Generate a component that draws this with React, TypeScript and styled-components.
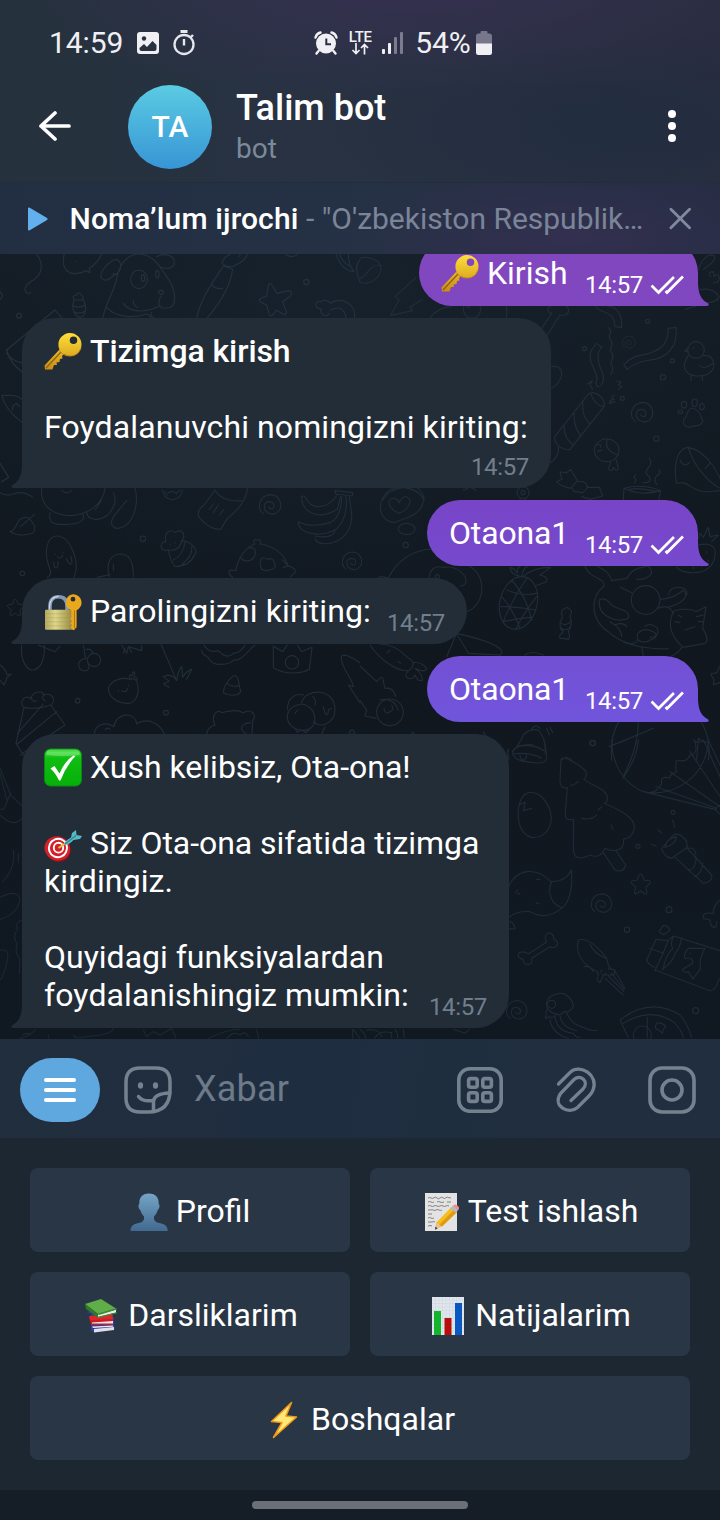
import React from "react";
import styled, { createGlobalStyle } from "styled-components";

const GlobalStyle = createGlobalStyle`
  * { box-sizing: border-box; }
  body { margin: 0; background: #151c25; }
`;

/* ---------- page ---------- */

const Screen = styled.div`
  width: 720px;
  height: 1520px;
  display: flex;
  flex-direction: column;
  overflow: hidden;
  font-family: Roboto, "Liberation Sans", sans-serif;
  color: #fff;
`;

const TopPanel = styled.header`
  height: 182px;
  flex: none;
  background:
    radial-gradient(ellipse 400px 110px at 410px -14px, #35304f 0%, rgba(53, 48, 79, 0) 100%),
    radial-gradient(ellipse 300px 100px at 610px 128px, #222d40 0%, rgba(34, 45, 64, 0) 100%),
    radial-gradient(ellipse 260px 160px at 720px 60px, #292c40 0%, rgba(41, 44, 64, 0) 100%),
    linear-gradient(90deg, #25313c 0%, #283243 40%, #28303f 100%);
`;

const StatusBar = styled.div`
  height: 72px;
  padding: 13px 0 0 49px;
  display: flex;
  align-items: center;
  color: #f0f0f4;
`;

const StatusText = styled.span<{ $gap?: number }>`
  font-size: 30px;
  line-height: 36px;
  letter-spacing: -0.1px;
  margin-left: ${(p) => p.$gap ?? 0}px;
`;

const StatusGroup = styled.div<{ $start: number; $gap: number }>`
  display: flex;
  align-items: center;
  gap: ${(p) => p.$gap}px;
  margin-left: ${(p) => p.$start}px;
`;

const NetworkType = styled.div`
  width: 24px;
  display: flex;
  flex-direction: column;
  align-items: center;
  font-size: 15px;
  font-weight: 500;
  line-height: 12px;
  letter-spacing: -0.3px;
`;

const HeaderRow = styled.div`
  height: 110px;
  display: flex;
  align-items: center;
  padding: 0 44px 0 38px;
`;

const Avatar = styled.div`
  width: 84px;
  height: 84px;
  margin-left: 56px;
  padding-bottom: 2px;
  border-radius: 50%;
  display: flex;
  align-items: center;
  justify-content: center;
  font-size: 30px;
  font-weight: 500;
  background: linear-gradient(#5bcbe3, #3795d5);
`;

const Titles = styled.div`
  flex: 1;
  margin-left: 24px;
  padding-bottom: 2px;
  display: flex;
  flex-direction: column;
`;

const Title = styled.h1`
  margin: 0;
  font-size: 36px;
  font-weight: 500;
  line-height: 42px;
`;

const Subtitle = styled.span`
  font-size: 28px;
  line-height: 34px;
  margin-top: 3px;
  color: #7b8a9a;
`;

const Player = styled.div`
  height: 72px;
  flex: none;
  display: flex;
  align-items: center;
  padding: 0 28px;
  border-top: 1px solid #242d3d;
  background:
    radial-gradient(ellipse 230px 80px at 570px 54px, #332f50 0%, rgba(51, 47, 80, 0) 100%),
    linear-gradient(90deg, #222f42 0%, #253144 55%, #252d42 100%);
`;

const TrackName = styled.div`
  width: 573px;
  margin: 0 26px 0 22px;
  font-size: 30px;
  line-height: 36px;
  white-space: nowrap;
  color: #7a8598;
  b { font-weight: 500; color: #fff; letter-spacing: 0.12px; }
`;

/* ---------- chat ---------- */

const Chat = styled.main`
  position: relative;
  flex: 1;
  min-height: 0;
  overflow: hidden;
  display: flex;
  flex-direction: column;
  justify-content: flex-end;
  gap: 12px;
  padding: 0 22px 11px;
  background:
    radial-gradient(ellipse 420px 330px at 330px 40px, #16212b 0%, rgba(22, 33, 43, 0) 100%),
    linear-gradient(#141d26, #10171f 50%, #101821);
`;

const Wallpaper = styled.svg`
  position: absolute;
  inset: 0;
  width: 720px;
  height: 785px;
`;

const Bubble = styled.div<{ $width: number; $out?: boolean; $bg?: string }>`
  position: relative;
  flex: none;
  width: ${(p) => p.$width}px;
  align-self: ${(p) => (p.$out ? "flex-end" : "flex-start")};
  padding: 14px 22px;
  border-radius: ${(p) => (p.$out ? "33px 33px 0 33px" : "33px 33px 33px 0")};
  background: ${(p) => p.$bg ?? "#222d38"};
  font-size: 32px;
  line-height: 38px;
`;

const Tail = styled.svg<{ $out?: boolean }>`
  position: absolute;
  bottom: 0;
  ${(p) => (p.$out ? "right: -11px; transform: scaleX(-1);" : "left: -11px;")}
`;

const Line = styled.div<{ $bold?: boolean; $tracking?: number }>`
  min-height: 38px;
  display: flex;
  align-items: center;
  white-space: nowrap;
  font-weight: ${(p) => (p.$bold ? 500 : 400)};
  letter-spacing: ${(p) => p.$tracking ?? 0}px;
`;

const Emoji = styled.svg`
  width: 38px;
  height: 38px;
  flex: none;
  margin-right: 8px;
  overflow: visible;
`;

const LastLine = styled.div`
  display: flex;
  justify-content: space-between;
  height: 38px;
`;

const Meta = styled.div<{ $out?: boolean; $own?: boolean }>`
  height: 28px;
  margin-top: ${(p) => (p.$own ? 7 : 17)}px;
  margin-bottom: ${(p) => (p.$own ? -7 : 0)}px;
  margin-right: ${(p) => (p.$out ? -8 : 0)}px;
  display: flex;
  align-items: center;
  justify-content: flex-end;
  gap: 7px;
  font-size: 24px;
  line-height: 28px;
  letter-spacing: -0.35px;
  color: ${(p) => (p.$out ? "#fff" : "#717e8c")};
`;

/* ---------- composer, reply keyboard ---------- */

const Composer = styled.div`
  height: 99px;
  flex: none;
  display: flex;
  align-items: center;
  padding: 3px 24px 0 20px;
  background: linear-gradient(100deg, #212e3d 0%, #1f2d41 45%, #1f2e3f 60%, #212e40 100%);
`;

const MenuButton = styled.button`
  width: 80px;
  height: 64px;
  padding: 0;
  border: 0;
  border-radius: 32px;
  background: #5fa7df;
  display: flex;
  align-items: center;
  justify-content: center;
  margin-right: 24px;
`;

const Placeholder = styled.span`
  flex: 1;
  margin-left: 22px;
  padding-bottom: 2px;
  font-size: 36px;
  line-height: 42px;
  letter-spacing: 0.2px;
  color: #6c7a89;
`;

const ComposerIcons = styled.div`
  display: flex;
  align-items: center;
`;

const Keyboard = styled.div`
  height: 352px;
  flex: none;
  padding: 30px;
  display: grid;
  grid-template-columns: 1fr 1fr;
  grid-auto-rows: 84px;
  gap: 20px;
  background: #1d2731;
`;

const Key = styled.button<{ $wide?: boolean }>`
  grid-column: ${(p) => (p.$wide ? "1 / -1" : "auto")};
  border: 0;
  border-radius: 8px;
  padding: 2px 0 0;
  display: flex;
  align-items: center;
  justify-content: center;
  background: #293645;
  color: #fff;
  font-family: inherit;
  font-size: 32px;
  ${Emoji} { margin-top: 2px; }
`;

const NavBar = styled.div`
  height: 30px;
  flex: none;
  display: flex;
  align-items: center;
  justify-content: center;
  background: #151d26;
`;

const Handle = styled.div`
  width: 216px;
  height: 8px;
  border-radius: 4px;
  background: #6b7078;
`;

/* ---------- emoji ---------- */

const KeyEmoji = () => (
  <Emoji viewBox="0 0 38 38" role="img" aria-label="key">
    <defs>
      <linearGradient id="keyGold" x1="0" y1="0" x2="0" y2="1">
        <stop offset="0" stopColor="#ffdf3a" />
        <stop offset="1" stopColor="#c98c14" />
      </linearGradient>
    </defs>
    <path
      fillRule="evenodd"
      fill="url(#keyGold)"
      d="M26 1 a11.500 11.500 0 0 1 0 23 q-3.500 0-6-2 l-2 2 .500 2.500-2.500 .500-.500 3-3 .500 .500 2.500-3 0-1.500 4.500H1l-.500-4L15.500 17.500A11.500 11.500 0 0 1 26 1Z M29.500 4.500a3.700 3.700 0 1 0 0 7.500a3.700 3.700 0 1 0 0-7.500Z"
    />
    <path d="M2 36 L17 20" stroke="#8f6110" strokeWidth="1.200" fill="none" />
    <path d="M15.500 18.500 Q19 24 26 24 Q34 24 37 16" stroke="#c98a10" strokeWidth="1" fill="none" />
  </Emoji>
);

const LockEmoji = () => (
  <Emoji viewBox="0 0 38 38" role="img" aria-label="locked with key">
    <defs>
      <linearGradient id="brass">
        <stop offset="0" stopColor="#b5a95e" />
        <stop offset=".35" stopColor="#ddd78c" />
        <stop offset="1" stopColor="#8b7d34" />
      </linearGradient>
    </defs>
    <g transform="translate(0 1.300)">
      <path d="M6 18 V13 Q6 3.500 14.500 3.500 T23 13 V18" fill="none" stroke="#8299b3" strokeWidth="3.600" />
      <path d="M5.500 16 V13 Q6 3.200 14.500 3" fill="none" stroke="#cfd9e3" strokeWidth="1.200" />
      <rect x="1" y="16.500" width="30" height="20" rx="1" fill="url(#brass)" />
      <path d="M1 20.500 H31 M1 24.500 H31 M1 28.500 H31 M1 32.500H31" stroke="#a3964c" strokeWidth=".5" opacity=".7" />
      <path
        fillRule="evenodd"
        fill="#eaa81f"
        d="M29 1 a8.300 8.300 0 0 1 3.600 15.900 V34 l-3 3 -2-1.500 -.8-2 1.500-1.500-2-2 2-2-2-2 1-2 V17 A8.300 8.300 0 0 1 29 1Z M29 3.500a2.400 2.400 0 1 0 0 4.800a2.400 2.400 0 1 0 0-4.800Z"
      />
      <path d="M30.500 17 V35" stroke="#b5730c" strokeWidth="1" />
    </g>
  </Emoji>
);

const CheckEmoji = () => (
  <Emoji viewBox="0 0 38 38" role="img" aria-label="done">
    <defs>
      <linearGradient id="checkGreen" x1="0" y1="0" x2="0" y2="1">
        <stop offset="0" stopColor="#4fe04d" />
        <stop offset=".25" stopColor="#10bd12" />
        <stop offset="1" stopColor="#05b00a" />
      </linearGradient>
    </defs>
    <rect x=".5" y="1" width="37" height="37" rx="6" fill="url(#checkGreen)" stroke="#0a8a10" strokeWidth="1" />
    <path d="M4 3.500 H34 Q36 3.500 35.500 7 Q19 9 2.500 7 Q2 3.500 4 3.500Z" fill="#8df08a" opacity=".5" />
    <path d="M6.500 20.500 L10.500 18 L15.500 25.500 Q21 12.500 29.500 7.500 L31.500 8 Q22 18 16.500 32.500 H15 Q11.500 25 6.500 20.500Z" fill="#fff" />
  </Emoji>
);

const TargetEmoji = () => (
  <Emoji viewBox="0 0 38 38" role="img" aria-label="target">
    <g transform="translate(0 5)">
      <ellipse cx="14.500" cy="20.800" rx="12.500" ry="12" fill="#8d0f14" transform="rotate(25 14.500 20.800)" />
      <ellipse cx="13.300" cy="19.500" rx="13" ry="12" fill="#d3202a" transform="rotate(25 13.300 19.500)" />
      <ellipse cx="14" cy="19" rx="9" ry="9.300" fill="none" stroke="#fff" strokeWidth="2" transform="rotate(25 14 19)" />
      <ellipse cx="14.500" cy="18.700" rx="4.700" ry="4.900" fill="none" stroke="#fff" strokeWidth="1.900" />
      <path d="M14.500 19 L22 14" stroke="#e7c03d" strokeWidth="2" />
      <path d="M20 15.500 Q20 12.500 27 8.500 L28 4 L32 1 L32.500 6 L38 7 L36 10 L29.500 11 Q24 17 20 15.500Z" fill="#58b9c4" />
      <path d="M21 15 L32 6.500" stroke="#2a8793" strokeWidth="1.200" />
    </g>
  </Emoji>
);

const PersonEmoji = () => (
  <Emoji viewBox="0 0 38 38" role="img" aria-label="profile">
    <defs>
      <linearGradient id="bust" x1="0" y1="0" x2="0" y2="1">
        <stop offset="0" stopColor="#74a5c6" />
        <stop offset="1" stopColor="#426990" />
      </linearGradient>
    </defs>
    <path
      fill="url(#bust)"
      d="M19 .5 C26 .5 29 5 28.700 11 C30.200 12 29.500 16 27.700 17 C27 20 25.500 22 24 23.500 Q23.500 28 27 29.500 C33 31 37.500 31 37.800 38 H.5 C.8 31 5 31 11 29.500 Q14.500 28 14 23.500 C12.500 22 11 20 10.300 17 C8.500 16 7.800 12 9.300 11 C9 5 12 .5 19 .5Z"
    />
  </Emoji>
);

const MemoEmoji = () => (
  <Emoji viewBox="0 0 38 38" role="img" aria-label="memo">
    <rect x="3" y="0" width="32" height="38" fill="#e3e3e3" />
    <path
      d="M6 5 q1.500-1 3 0 t3-.3 t3 .3 t3 0 t3-.2 t3 0 t3 0 h2 M6 9 q1.500-1 3 0 t3 0 M15 9 q1.500-1 3 0 t4 0 M25 9h4 M6 13 q1.500-1 3 0 t3 0 t3 0 t3 0 t3 0 t3 0 t3 0 M6 17 h3 q1-1 2 0 t3 0 t3 0 t3 0 M6 21 h4 M6 25 q2-1 3 0 t3 0 M6 29 h4 q2-1 3 0 M6 33 q2-1 4 0"
      fill="none"
      stroke="#6a6a6a"
      strokeWidth=".8"
    />
    <path d="M14 30 L29 14.500 L35 19 L20 33.500Z" fill="#f7bd1c" />
    <path d="M17 32 L32 17 L35 19 L20 33.500Z" fill="#e09a10" />
    <path d="M14 30 L20 33.500 L13.500 36.500Z" fill="#e7c08d" />
    <path d="M13.500 33.500 L15.500 35.500 L13 36.800Z" fill="#333" />
    <path d="M28 15.500 L30.500 13 L36 17 L34 19.800Z" fill="#b6babf" />
    <path d="M30.500 13 Q33 10 36 13 Q38 15 36 17.500Z" fill="#ee8f98" />
  </Emoji>
);

const BooksEmoji = () => (
  <Emoji viewBox="0 0 38 38" role="img" aria-label="books">
    <path d="M4 16 L9 14 V34 L12 35 L33 32 L31 18Z" fill="#2a3f9c" />
    <path d="M12 32 L32 30 V33 L12 35.500Z" fill="#dfe0e8" />
    <path d="M7 19 L30 17 L31 21 L31 23 L8 24Z" fill="#e0262a" />
    <path d="M8 23 L31 22 V28 H9Z" fill="#c81d22" />
    <path d="M10 25.500 L31 24 V26.500 H10Z M10 29.500 L31 28.500 V29.700 L11 31Z" fill="#ece8ec" />
    <path d="M3 7 L19 2 L34 11.500 L16 17Z" fill="#5fae49" />
    <path d="M3 7 L16 17 L15.500 20.500 L4 12Z" fill="#2c7a2b" />
    <path d="M16 17.500 L34 12.500 V15.500 L16 20Z" fill="#e9ece6" />
    <path d="M16 16.500 L35 11.300 V12.500 L17 18Z M15 20 L35 15.300 V16.300 L16 21Z" fill="#3a8f35" />
  </Emoji>
);

const ChartEmoji = () => (
  <Emoji viewBox="0 0 38 38" role="img" aria-label="bar chart">
    <rect x="3" y="0" width="32" height="38" fill="#dfe6ee" />
    <path
      d="M3 3H35 M3 6.500H35 M3 10H35 M3 13.500H35 M3 17H35 M3 20.500H35 M3 24H35 M3 27.500H35 M3 31H35 M3 34.500H35 M6.500 0V38 M10 0V38 M13.500 0V38 M17 0V38 M20.500 0V38 M24 0V38 M27.500 0V38 M31 0V38"
      stroke="#ccd4dd"
      strokeWidth=".5"
    />
    <path d="M5 14 H12 V38 H5Z" fill="#12b52c" />
    <path d="M15.500 21 H22.500 V38 H15.500Z" fill="#b80d0d" />
    <path d="M26 6 H33 V38 H26Z" fill="#0a58c2" />
  </Emoji>
);

const BoltEmoji = () => (
  <Emoji viewBox="0 0 38 38" role="img" aria-label="lightning">
    <path
      d="M26.500 1.500 L6.500 20.500 L17 21.500 L8.500 36.500 L31.500 16 L21 15Z"
      fill="#ffe873"
      stroke="#f0981a"
      strokeWidth="1.600"
      strokeLinejoin="round"
    />
  </Emoji>
);

/* ---------- wallpaper ---------- */

const Swirl = ({ x, y, s = 1 }: { x: number; y: number; s?: number }) => (
  <path
    transform={`translate(${x} ${y}) scale(${s})`}
    d="M-20 25 C-42 8 -32 -30 2 -32 C34 -30 42 10 18 24 C0 32 -22 18 -16 -2 C-8 -18 14 -10 12 4 C10 14 -2 12 -4 4"
  />
);

const Star = ({ x, y, s = 1 }: { x: number; y: number; s?: number }) => (
  <path
    transform={`translate(${x} ${y}) scale(${s})`}
    d="M-6 -27 Q0 -36 5 -27 L11 -12 L27 -10 Q34 -7 28 -1 L16 11 L20 27 Q19 34 11 30 L0 22 L-13 30 Q-21 32 -19 24 L-15 10 L-28 -1 Q-33 -8 -25 -10 L-11 -12Z"
  />
);

const Dots = ({ at }: { at: number[][] }) => (
  <>
    {at.map(([x, y, r]) => (
      <circle key={`${x}-${y}`} cx={x} cy={y} r={r} />
    ))}
  </>
);

/* Each group is drawn on a grid three times finer than the screen. */
const Doodles = () => (
  <Wallpaper viewBox="0 254 720 785" fill="none" stroke="#202d38" strokeWidth="3.400" strokeLinecap="round" strokeLinejoin="round" aria-hidden>
    <g transform="translate(0 250) scale(.33333)" stroke="#23323e">
      <path d="M110 12 C130 40 130 70 100 90 C75 105 70 120 80 128 Q86 133 92 128" />
      <path d="M193 12 C180 60 210 85 258 62 L270 68 L268 55 C285 45 300 25 305 12 M229 33v2" />
      <path d="M222 150 C212 175 225 200 240 202 C258 200 262 170 250 150 Z M222 150 Q215 135 230 135 Q235 122 243 134 Q252 138 248 150 M222 168 Q238 176 256 166 M222 185 Q240 195 256 183" />
      <path d="M308 205 C320 150 345 120 350 85 C360 40 380 12 420 12 C460 15 480 50 500 80 C530 120 530 165 510 172 Q485 180 478 165 Q475 148 483 140 M370 160 C390 190 440 188 478 168 M400 150 Q398 165 412 172 M340 70 C345 80 355 70 362 55 M362 45 Q360 25 340 30 C315 45 295 75 305 85 Q320 100 345 72 M470 20 C500 5 528 20 522 45 C512 60 495 55 482 52 M318 170 C340 198 390 208 440 192 L462 203 M455 188 L450 203" />
      <ellipse cx="417" cy="88" rx="25" ry="28" />
      <ellipse cx="429" cy="84" rx="5" ry="10" />
      <ellipse cx="472" cy="73" rx="5" ry="11" />
      <path d="M475 124 Q484 118 491 124 Q488 134 483 134 Q478 132 475 124" />
      <path d="M590 205 C600 150 635 100 670 48 L698 58 C690 110 660 160 620 205 M635 103 Q645 118 668 115 M665 36 Q675 55 705 48 M668 34 Q675 18 690 14 M705 45 Q735 35 742 12 M715 22 L722 12" />
      <path d="M806 102 Q812 98 818 108 L830 130 L866 122 Q880 125 872 138 L848 155 L860 188 Q858 198 845 190 L828 180 Q815 205 808 194 L800 165 L780 155 Q775 145 785 145 L800 138Z" />
      <path d="M988 190 C980 205 955 192 965 178 C940 175 945 148 962 155 C975 147 988 152 990 160 C1030 135 1072 170 1063 205 M992 180 C1020 165 1035 180 1038 204 M855 12 Q880 28 893 12 M1008 12 Q1025 62 1062 65 Q1045 45 1045 12 M1018 12 Q1030 40 1050 48 M1080 30 Q1060 50 1080 95" />
      <path d="M165 180 L20 300 Q30 340 66 365 M165 180 L185 203 M20 310 Q40 335 66 338 M6 435 L24 436 Q50 434 66 448 M6 435 Q12 475 66 517 M38 480 Q34 468 50 460 L58 470 M0 640 L26 682 L4 696 M0 125 Q14 140 0 148" />
      <Dots at={[[919, 96, 8], [57, 197, 7]]} />
    </g>

    <g transform="translate(360 250) scale(.33333)" stroke="#212e3a">
      <path d="M0 25 C30 15 72 35 62 65 C50 95 20 105 0 97 M62 45 C20 45 25 80 0 85" />
      <path d="M168 82 L105 140 L117 150 L92 196 L158 182 L150 172 L185 150 M210 205 Q230 172 275 170 M440 170 V205" />
      <ellipse cx="336" cy="178" rx="26" ry="27" />
      <path d="M545 235 L575 190 M560 258 L600 195 C622 202 635 180 618 168 M575 190 C560 185 560 170 575 168" />
      <path d="M705 168 C720 195 762 175 765 230 L785 232 C786 195 775 172 745 168" />
      <path d="M745 233 q12 8 4 20 q-3 12 4 18 q6 10 0 20 q-4 12 3 18 q6 10 0 20 q-6 12 0 18 q6 14 -4 26" />
      <path d="M925 235 L948 232 C955 290 920 325 870 330 Q820 338 802 358 L791 345 C820 310 850 320 880 305 Q925 290 925 235Z" />
      <path d="M710 280 L725 292 C705 310 715 340 728 370 C735 395 725 410 712 410 L707 398 C722 380 690 345 690 320 Q690 300 710 280Z" />
      <path d="M683 402 L697 392 L690 405 L698 418 M770 393 L784 396 L776 405 L786 410 L775 418 M765 435 Q748 438 762 448 Q748 450 748 460 L766 455" />
      <circle cx="1008" cy="300" r="25" />
      <path d="M985 317 C965 345 970 375 1010 378 C1060 380 1070 345 1055 325 C1045 312 1032 318 1027 317 M984 296 L973 302 L984 306 M1018 345 C1030 360 1050 348 1058 340 M993 378 V392 M1027 378 V392 M1000 292v4" />
      <path d="M685 432 L584 560 C580 580 610 605 630 598 L732 470 C738 445 705 418 685 432Z M692 430 C700 455 715 468 732 470 M668 455 Q665 500 690 522 M642 488 Q640 530 662 556 M612 528 Q612 565 640 585" />
      <Swirl x={846} y={489} />
      <Swirl x={806} y={278} s={0.62} />
      <path d="M996 474 C978 478 985 500 972 508 C965 530 985 537 1000 527 C1018 530 1035 518 1025 505 Q1018 478 996 474Z" />
      <ellipse cx="972" cy="464" rx="8" ry="10" />
      <ellipse cx="1004" cy="458" rx="8" ry="11" />
      <ellipse cx="1026" cy="470" rx="7" ry="9" />
      <ellipse cx="961" cy="485" rx="7" ry="5" />
      <ellipse cx="740" cy="601" rx="37" ry="34" />
      <path d="M742 568 Q730 600 775 615 M712 585 Q725 580 722 592 M713 602 Q722 606 726 598 M752 635 L745 658 Q758 668 760 652 Q772 668 775 655 L768 628" />
      <path d="M632 658 L652 692 L632 715 Q595 705 590 695 L606 688 L600 666 L620 668Z M655 695 Q678 692 682 710 Q672 735 655 725 Q640 728 638 715 M682 712 L718 712 L728 738 L690 748 L665 740" />
      <path d="M790 750 L792 715 Q845 700 902 722 L896 750 M792 715 Q840 740 902 722 M808 718 Q840 712 885 724 M868 625 C885 650 850 655 860 672 C882 690 865 700 850 698 M895 660 Q910 665 888 680 Q880 695 892 704 M826 675 Q816 682 828 688 L824 700" />
      <path d="M950 700 C938 640 955 592 985 592 C1030 600 1065 650 1080 685 M950 700 C990 690 985 722 1040 726 L1078 722 M985 592 C1000 650 1050 700 1080 715 M960 630 Q972 655 988 638 M1035 655 L1052 638" />
      <path d="M1014 62 C1025 25 1050 5 1065 20 Q1065 35 1030 58 M1052 80 Q1040 65 1060 65 L1062 80 Q1075 65 1078 85 Q1075 100 1060 98 M1018 120 Q1055 110 1078 140 Q1060 165 1030 155 M1072 150v2 M1010 168 L975 178" />
      <path d="M575 350 Q605 345 605 375 Q600 400 575 415 M595 590 Q598 620 572 638 M68 750 Q90 715 130 712 Q180 720 192 750 M310 720 L330 712 L348 720" />
      <Dots at={[[863, 214, 6], [673, 296, 6], [937, 332, 6], [909, 382, 8], [787, 445, 6], [889, 566, 8], [325, 168, 5]]} />
    </g>

    <g transform="translate(0 480) scale(.33333)" stroke="#212e39">
      <path d="M0 38 Q20 50 40 42 Q70 30 98 52 M30 155 C55 150 45 115 75 112 C85 110 95 122 102 135 Q108 150 98 160 Q60 172 30 155 M62 140 L103 103" />
      <path d="M125 25 C120 70 150 105 210 107 C265 105 310 70 315 25 M150 98 C145 130 160 135 200 133 C250 132 255 115 248 102 M185 32 Q200 45 215 32 M260 98 C265 130 325 125 342 75 Q350 55 340 38 M405 25 C415 60 408 115 375 138 C345 155 325 138 340 110 L380 62 M305 60 L285 90" />
      <path d="M488 30 Q490 55 517 60 Q545 55 547 30 M505 38 Q520 30 530 42 M495 35 L502 45 M540 30 L530 38" />
      <path d="M645 30 L612 75 Q585 95 600 115 Q630 150 662 148 L682 115 Q735 75 743 25 M645 32 Q670 68 725 62 M655 75 L640 98 M672 88 L658 105 M640 72 L628 88" />
      <Swirl x={810} y={76} />
      <path d="M905 50 C905 100 960 122 1012 88 L1022 50 M905 50 Q912 44 918 55 C935 90 980 90 1012 45 M895 125 Q930 145 990 128 Q1022 115 1026 50 M895 125 C890 160 960 175 1008 148 Q1045 115 1038 50 M1005 150 Q1000 178 945 168 M945 175 C950 205 1060 200 1055 100 L1048 50 M1004 32 L1058 38 L1057 48 L1008 42Z" />
      <path d="M142 292 Q158 285 148 262 C130 215 140 165 175 168 C215 175 232 240 228 272 L222 292 M165 222v2 M189 216v2 M172 230 Q185 240 188 224 M162 246 Q160 265 170 264 Q176 255 174 245 M198 235 Q210 260 216 250 Q215 235 212 228" />
      <path d="M328 290 C315 245 335 222 365 222 C400 225 400 270 400 290 M292 292 L330 284 M340 252 V272" />
      <path d="M505 210 C480 215 475 190 498 184 C490 155 515 145 525 158 C545 142 560 165 545 182 C580 185 595 215 583 225 Q570 258 525 260 Q510 240 505 210 Q540 215 545 182 M520 240 Q550 225 555 186 M545 255 Q580 225 575 200 M510 192v3 M525 186v3" />
      <path d="M698 292 Q680 280 692 270 L708 272 C712 235 740 200 765 192 Q755 178 770 180 Q788 178 780 192 C830 200 855 230 865 258 Q890 265 885 278 L872 290 M785 268 C772 235 790 228 802 238 Q822 228 826 262 Q805 278 785 268 M745 202 Q772 202 765 225 C755 250 730 245 722 232 M848 240 L865 258 L850 262" />
      <Swirl x={1056} y={245} s={0.9} />
      <Star x={46} y={382} s={0.8} />
      <path d="M65 495 C60 540 80 572 100 570 C130 565 135 520 133 495 M115 495 L165 515 L180 498 M250 495 L256 532 M258 508 Q275 505 280 520 M365 495 L380 520 L385 500 L425 512 V495 M370 520 L375 505 M395 518 L386 500" />
      <path d="M483 492 L530 602 Q515 578 490 590 L508 604 L490 612 L508 622 M530 602 Q535 570 545 560 L548 592 Q560 572 575 568 L560 598" />
      <path d="M605 510 C605 530 620 520 630 540 C640 560 690 555 700 540 C725 545 745 510 765 495 M612 495 Q625 520 655 512 Q680 540 700 520 Q720 520 735 495" />
      <path d="M820 498 V562 C850 585 905 582 928 568 L936 502 L905 515 L892 495 M820 498 L848 515 L862 495" />
      <circle cx="876" cy="547" r="20" />
      <path d="M325 625 C335 595 375 592 388 598 Q412 592 413 615 C420 650 400 670 385 670 C350 670 325 650 325 625 M390 596 Q385 578 396 588 Q398 570 404 578 L402 592 Q415 590 410 602 M355 632v2 M385 615v2 M365 632 Q380 640 382 625" />
      <path d="M698 590 Q708 580 714 598 L722 635 Q708 655 670 638 Q672 610 698 590Z M680 610 Q700 625 718 616" />
      <circle cx="282" cy="540" r="20" />
      <path d="M265 550 Q272 572 252 573 Q235 570 236 550 Q242 536 258 536" />
      <path d="M72 682 L48 790 L72 828 M72 682 C55 672 72 640 92 656 C98 632 128 632 132 645 C158 635 170 665 152 675 L195 735 L60 825 M72 682 Q115 690 152 675 M130 672 L52 760 M170 695 L52 792 M95 656 Q98 668 110 662 M132 645 Q122 655 135 662" />
      <path d="M283 762 C285 735 315 722 342 740 C345 700 405 690 410 732 C440 710 480 730 493 762 M315 750 Q320 740 330 748" />
      <path d="M620 762 Q622 742 645 735 C630 705 655 685 665 698 C700 690 715 690 730 698 C752 685 772 702 758 722 L756 762 M752 728 Q722 730 725 748 Q732 760 738 760" />
      <path d="M905 672 C960 680 955 760 905 750 C850 745 845 680 905 672 M863 690 C860 650 890 640 910 645 M905 668 C915 625 1005 620 1005 690 C1003 735 955 745 940 725 M885 745 L892 757 L905 750 L918 758 L930 745 M938 650 Q950 660 945 675 M970 680 L975 700 Q985 710 985 690 L995 685 M885 700 L893 690 M975 740 L965 762" />
      <path d="M1080 548 Q1030 515 1024 530 C1020 560 1060 600 1060 620 L1045 615 L1080 668 M0 555 Q20 570 20 585 L33 582 L22 592 L12 615 L0 600" />
      <Dots at={[[429, 176, 8], [67, 280, 7], [233, 662, 7], [498, 698, 7], [1056, 757, 7]]} />
    </g>

    <g transform="translate(360 480) scale(.33333)" stroke="#202d38">
      <path d="M70 110 C45 80 75 20 115 22 C165 0 200 40 190 65 C180 110 130 115 105 127 Q85 128 70 110Z M118 100 C80 85 80 55 100 55 Q112 55 118 68 C125 45 150 45 150 65 Q145 90 118 100" />
      <ellipse cx="140" cy="147" rx="25" ry="17" />
      <path d="M85 295 C110 240 160 210 215 207 M320 255 C360 270 372 310 362 350 Q350 385 320 395 M208 300 C205 270 225 255 250 262 C290 255 320 285 318 305 Q315 318 300 318 M52 295 Q65 285 85 295" />
      <circle cx="489" cy="38" r="18" />
      <circle cx="489" cy="38" r="6" />
      <path d="M480 55 V62 M497 54 V62" />
      <path d="M485 290 C520 290 535 330 533 360 C530 400 505 448 465 448 C425 445 415 400 418 370 C425 330 450 290 485 290Z M440 330 Q490 350 530 340 M422 380 Q470 380 528 390 M430 425 Q470 415 515 412 M455 300 Q500 350 515 420 M425 350 Q460 390 480 445 M500 295 Q455 360 430 425 M530 350 Q490 400 468 447" />
      <path d="M485 290 Q450 285 450 262 Q465 265 472 280 Q470 262 480 260 M485 290 Q490 262 502 260 M488 290 Q520 262 572 262 Q555 275 540 285 Q565 290 560 305 L525 318" />
      <path d="M607 412 C595 430 600 450 610 455 L600 465 Q595 478 610 475 L625 478 Q632 470 625 455 Q640 430 630 410 L635 395 Q625 378 615 385 Q600 390 607 412Z M605 430 Q618 440 632 425 M604 445 Q618 455 630 442" />
      <path d="M675 258 C690 300 735 290 732 318 C690 350 690 420 745 455 C780 490 850 510 925 506 M710 258 Q750 275 755 302 L800 295 Q820 262 850 262 M850 262 Q870 250 875 280 Q860 300 830 298 M782 322 L815 338 M718 360 C712 410 770 430 805 415 C815 385 760 390 750 370 Q735 350 718 360 M750 425 Q785 445 785 470 M765 435 Q790 425 800 440" />
      <circle cx="857" cy="360" r="43" />
      <path d="M900 358 Q945 355 970 330 C985 345 980 365 925 382 M925 345 Q930 320 960 322 Q985 325 980 345 M895 385 Q925 370 940 400 M832 462 Q850 440 880 455 Q900 470 875 478 Q850 495 832 478Z M855 440 Q870 425 892 445 Q900 470 870 472" />
      <path d="M938 398 C950 385 990 385 1008 395 L1038 380 L1028 445 Q1050 480 1035 490 L970 502 Q915 455 938 398 M955 405 L965 412 M945 425 L960 428 M975 450 L1005 440 M1010 410 L1030 405 M1015 425 L1032 424 M845 500 L850 528 M790 485 Q820 500 835 480 M965 502 Q955 520 935 528" />
      <path d="M30 495 C60 540 110 575 145 572 C165 560 165 545 140 530 C110 500 80 492 60 492 M145 572 Q130 590 145 595 Q160 600 165 585 Q175 608 188 600 Q185 580 165 565 Q195 580 200 565 Q185 545 160 548 M80 520 L90 510 M115 545 L122 550" />
      <path d="M260 530 L290 460 Q400 485 422 508 Q430 520 420 525 L325 520 L290 462 M495 525 Q515 510 550 525" />
      <path d="M0 558 L50 605 Q70 580 70 605 L75 625 Q100 620 107 650 M0 662 L20 690 L15 708 L48 715" />
      <circle cx="90" cy="697" r="40" />
      <path d="M72 685 Q75 705 90 695 Q105 690 95 675 M60 660 Q100 650 115 690" />
      <path d="M1015 175 L1020 160 L1030 172 L1045 142 L1050 170 L1075 165 L1055 185 M1015 195 Q1060 185 1066 215 Q1065 270 1010 278 Q965 280 950 262 M1040 215v4 M1045 240v4 M1025 255v4 M1000 262v4" />
      <path d="M1080 558 L1070 578 L1052 582 L1062 600 L1060 614 L1080 608" />
      <path d="M458 815 Q480 790 490 765 Q510 745 535 750 Q560 780 555 820 M515 748 Q525 730 540 745 M470 800 Q520 790 552 812 M560 745 L568 765 M570 742 L578 758 M605 840 Q620 825 635 840 M330 762 Q340 770 330 764 M155 760 Q158 755 162 762 M370 755 L378 768 M445 812 Q440 825 447 838" />
      <path d="M755 840 Q750 770 775 728 M835 728 Q835 800 790 890 M1025 728 Q1055 780 1045 840 M748 800 L880 745 M1010 840 L1015 775 Q1030 790 1045 785" />
      <Dots at={[[137, 195, 8], [232, 290, 6], [698, 789, 8]]} />
    </g>

    <g transform="translate(0 740) scale(.33333)" stroke="#1d2833">
      <path d="M0 85 L32 165 L68 200 M0 100 L22 185 M32 158 L15 200 Q10 215 0 205 M0 225 Q40 265 66 235 M40 330 Q48 385 8 425 M55 340 V368 M0 472 Q55 445 60 480 Q50 525 0 538 M66 540 Q45 545 52 570 Q35 590 52 612 Q42 640 60 655 L58 700 M0 630 Q30 625 22 660 Q12 710 0 720" />
      <path d="M60 895 Q85 890 108 868 M68 885 Q80 875 92 885 M145 885 V895 M220 885 Q225 900 270 888 Q330 885 340 866 M430 870 L440 890 L460 875 L480 885 L515 865 L528 895 M625 895 Q690 865 720 868 M680 895 Q700 872 720 885 Q735 870 745 890 M770 868 L776 895 M1058 868 V895 M1060 868 L1080 895" />
    </g>

    <g transform="translate(360 740) scale(.33333)" stroke="#1f2b36">
      <path d="M458 32 Q455 60 500 65 Q550 75 558 60 Q562 40 552 0 M458 32 Q480 10 520 15 M458 42 Q510 35 545 55 M480 45 Q480 60 492 60 Q502 55 498 42 M445 28 Q438 38 447 50" />
      <path d="M510 157 C550 155 578 210 573 245 C565 285 535 295 515 292 C480 285 472 240 475 210 Q480 162 510 157Z M478 195 L496 186 L490 212 L515 205" />
      <path d="M603 58 C610 42 660 78 675 90 Q685 105 672 118 C700 142 745 145 742 178 Q740 188 733 190 C780 210 832 235 822 270 C815 290 805 295 790 298 Q795 325 770 330 Q750 335 735 325 Q722 358 690 345 Q640 370 640 325 L641 238 Q612 245 616 215 L622 143 Q600 148 600 120Z M632 137 Q645 135 655 125 M665 235 Q695 242 710 225 M715 210 L725 200 M754 255 L758 268" />
      <path d="M730 338 L765 390 Q790 400 797 375 L768 332" />
      <path d="M755 0 C755 70 790 130 850 155 C940 175 1040 110 1045 0 M835 0 Q830 60 788 115 M748 18 L800 0 M1005 5 Q1015 45 990 45 Q980 70 950 60 Q945 80 950 95 Q925 105 930 115 Q900 105 905 130 Q895 155 870 158 M1030 0 L1080 110 M990 35 L1080 170 M930 95 L1080 200 M888 140 L1070 205 M850 155 L1065 208 M1000 0 Q1020 15 1030 0 M1080 195 L1065 208 L1080 222 M1045 0 L1080 75" />
      <path d="M905 325 L940 285 Q960 275 980 305 L982 322 L935 355 Q910 350 905 325Z M915 322 Q920 295 950 290 Q945 315 915 322 M982 325 L1055 405 Q1060 425 1030 430 L945 352 M985 325 Q1005 320 1008 345 M1008 350 Q1010 385 985 392 M1028 370 Q1025 400 1005 410 M938 240 L944 262 M895 270 L905 278 M875 313 L888 318" />
      <Star x={842} y={432} s={0.95} />
      <Swirl x={724} y={492} s={0.95} />
      <Swirl x={470} y={812} s={0.95} />
      <path d="M447 438 C470 385 530 380 572 425 Q618 425 634 390 C640 450 625 490 605 505 C560 540 530 525 510 515 Q470 512 447 532 M575 425 C562 455 570 490 605 503 M466 458 L474 450 M470 462 L480 460 M530 418 L540 418 M528 488 L538 492 M447 545 Q460 545 466 565 Q455 570 447 565" />
      <path d="M505 642 L560 606 Q550 590 562 580 Q580 575 582 598 Q600 605 588 620 Q578 625 570 620 L515 655 Q520 675 500 673 Q490 672 490 658 Q472 655 475 640 Q490 630 505 642Z" />
      <path d="M655 600 Q690 590 740 655 L745 675 Q750 690 765 690 L762 705 L730 705 L720 728 Q705 720 715 705 L712 695 Q640 660 655 600Z M690 612 Q700 640 738 655 M672 680 Q690 675 700 695 M735 715 L790 765 M745 708 L792 755 M755 700 L792 748 M762 688 L795 745 M725 690 L722 698 M745 685 L748 690 M728 702 Q738 708 738 698" />
      <path d="M562 805 C550 770 590 755 615 762 Q640 780 640 798 M562 805 Q575 822 590 822 M555 830 Q560 842 568 828 Q575 840 590 822 Q600 830 612 815 Q630 820 640 798 M560 830 Q555 818 562 808 M570 838 Q575 880 625 895 M585 830 Q590 875 640 880 Q650 895 660 892 M600 828 Q605 862 650 872 M620 818 Q635 855 670 862 Q690 875 712 870" />
      <circle cx="575" cy="793" r="12" />
      <path d="M940 588 L1080 632 M885 690 L1050 752 Q1065 755 1078 715 M888 598 L860 660 Q865 675 885 682 M888 598 L925 602 M868 625 L910 640 M925 602 Q905 650 885 692 M940 590 Q930 610 938 625 Q915 650 910 685 M965 592 Q960 625 945 640 Q940 665 905 690 M925 602 L940 588 M985 625 L1035 625 M975 655 Q970 640 985 625 M975 655 Q1000 650 998 670 L968 688 Q970 700 985 695 L1000 718 M1035 625 Q1015 660 1022 685 L1000 715 M990 640v2" />
      <path d="M897 575 L910 556 Q925 558 930 570 L912 584Z" />
      <path d="M780 840 Q870 770 960 825 Q985 855 995 893 M790 850 Q870 800 940 845 Q965 870 970 893 M780 840 L805 893 M862 833 V893 M890 850 Q880 865 895 870 L908 880 Q908 865 918 860 Q905 845 890 850Z" />
      <circle cx="847" cy="885" r="27" />
      <path d="M1080 480 Q1060 495 1060 520 Q1025 515 1030 535 L1050 540 Q1050 560 1065 563 Q1072 555 1070 545 M0 868 Q20 885 15 895 M20 870 Q60 865 65 890 M45 893 Q60 870 95 878 V893 M105 868 Q115 880 112 893 M130 868 L133 893 M280 868 L315 880 L328 868" />
      <Dots at={[[698, 10, 8], [939, 217, 6], [834, 319, 6], [927, 509, 9], [801, 569, 8], [1007, 812, 9]]} />
    </g>
  </Wallpaper>
);

/* ---------- small parts ---------- */

const BubbleTail = ({ color, out }: { color: string; out?: boolean }) => (
  <Tail $out={out} width="12" height="24" viewBox="0 0 12 24">
    <path d="M11 0 C11 11 8 18 1.200 21.200 C-.4 22 .2 24 2 24 H12 V0Z" fill={color} />
  </Tail>
);

const ReadTicks = () => (
  <svg width="34" height="20" viewBox="0 0 34 20" fill="none" stroke="#fff" strokeWidth="2.700" strokeLinecap="square">
    <path d="M2.500 11.500 L8.500 17.500 L23 3" />
    <path d="M16.500 17 L17 17.500 L32 2.500" />
  </svg>
);

type OutgoingProps = {
  text: string;
  width: number;
  from: string;
  to: string;
  icon?: React.ReactNode;
  tracking?: number;
};

const Outgoing = ({ text, width, from, to, icon, tracking }: OutgoingProps) => (
  <Bubble $out $width={width} $bg={`linear-gradient(${from}, ${to})`}>
    <LastLine>
      <Line $tracking={tracking}>
        {icon}
        {text}
      </Line>
      <Meta $out>
        14:57
        <ReadTicks />
      </Meta>
    </LastLine>
    <BubbleTail out color={to} />
  </Bubble>
);

const keys = [
  { label: "Profil", icon: <PersonEmoji /> },
  { label: "Test ishlash", icon: <MemoEmoji /> },
  { label: "Darsliklarim", icon: <BooksEmoji /> },
  { label: "Natijalarim", icon: <ChartEmoji /> },
  { label: "Boshqalar", icon: <BoltEmoji />, wide: true },
];

export default function App() {
  return (
    <Screen>
      <GlobalStyle />
      <TopPanel>
        <StatusBar>
          <StatusText>14:59</StatusText>
          <StatusGroup $start={14} $gap={14}>
            <svg width="22" height="22" viewBox="0 0 22 22">
              <rect width="22" height="22" rx="3" fill="#f0f0f4" />
              <circle cx="7" cy="6.500" r="2.200" fill="#28323f" />
              <path d="M2.500 16 L7 12 L10 15 L15.500 9 L19.500 13 V17 Q19.500 19 17.500 19 H4.500 Q2.500 19 2.500 17Z" fill="#28323f" />
            </svg>
            <svg width="22" height="26" viewBox="0 0 22 26" fill="none" stroke="#e6e7ec">
              <circle cx="11" cy="14.500" r="9.500" strokeWidth="2.300" />
              <path d="M7.500 1.500 H14.500" strokeWidth="3" />
              <path d="M11 9 V15.500" strokeWidth="2.400" />
              <path d="M17.500 7.500 L20 5" strokeWidth="2.400" />
            </svg>
          </StatusGroup>
          <StatusGroup $start={119} $gap={10}>
            <svg width="24" height="24" viewBox="0 0 24 24">
              <circle cx="12" cy="12.500" r="10" fill="#f0f0f4" />
              <path d="M1.500 6.500 Q2.500 2.500 6.500 1.500 M22.500 6.500 Q21.500 2.500 17.500 1.500 M4.500 20 L2.500 22.500 M19.500 20 L21.500 22.500" stroke="#f0f0f4" strokeWidth="2.400" fill="none" strokeLinecap="round" />
              <path d="M12.300 7.500 V13.300 H17" stroke="#2b2f45" strokeWidth="2" fill="none" />
            </svg>
            <NetworkType>
              LTE
              <svg width="20" height="12" viewBox="0 0 20 12" fill="none" stroke="#f0f0f4" strokeWidth="1.700">
                <path d="M6 0 V10.500 M2.500 7 L6 10.500 L9.500 7 M14.500 11.500 V1.500 M11 5 L14.500 1.500 L18 5" />
              </svg>
            </NetworkType>
            <svg width="22" height="24" viewBox="0 0 22 24">
              <rect x="0" y="18" width="3" height="5" rx="1" fill="#f0f0f4" />
              <rect x="6" y="12" width="3" height="11" rx="1" fill="#f0f0f4" />
              <rect x="12" y="6" width="3" height="17" rx="1" fill="#7c7b8f" />
              <rect x="18" y="1" width="3" height="22" rx="1" fill="#7c7b8f" />
            </svg>
          </StatusGroup>
          <StatusText $gap={11}>54%</StatusText>
          <StatusGroup $start={5} $gap={0}>
            <svg width="16" height="24" viewBox="0 0 16 24">
              <path d="M4.500 1 Q4.500 0 5.500 0 H10.500 Q11.500 0 11.500 1 V2.500 H13.500 Q16 2.500 16 5 V13 H0 V5 Q0 2.500 2.500 2.500 H4.500Z" fill="#77778b" />
              <path d="M0 12.500 H16 V21.500 Q16 24 13.500 24 H2.500 Q0 24 0 21.500Z" fill="#f0f0f4" />
            </svg>
          </StatusGroup>
        </StatusBar>
        <HeaderRow>
          <svg width="34" height="32" viewBox="0 0 34 32" fill="none" stroke="#fff" strokeWidth="3.700" strokeLinecap="round" strokeLinejoin="round">
            <path d="M17 2 L3 15 L17 28 M3 15 H31" />
          </svg>
          <Avatar>TA</Avatar>
          <Titles>
            <Title>Talim bot</Title>
            <Subtitle>bot</Subtitle>
          </Titles>
          <svg width="8" height="34" viewBox="0 0 8 34" fill="#fff">
            <circle cx="4" cy="4" r="4" />
            <circle cx="4" cy="16" r="4" />
            <circle cx="4" cy="28" r="4" />
          </svg>
        </HeaderRow>
      </TopPanel>

      <Player>
        <svg width="20" height="24" viewBox="0 0 20 24">
          <path d="M0 1.200 Q0 -.5 1.800 .6 L19.500 11 Q20.500 12 19.500 13 L1.800 23.400 Q0 24.500 0 22.800Z" fill="#63b0ee" />
        </svg>
        <TrackName>
          <b>Noma’lum ijrochi</b> - "O'zbekiston Respublik…
        </TrackName>
        <svg width="24" height="24" viewBox="0 0 24 24" stroke="#7f8a9c" strokeWidth="2.900" strokeLinecap="round">
          <path d="M2 2 L21 21 M21 2 L2 21" />
        </svg>
      </Player>

      <Chat>
        <Doodles />
        <Outgoing text="Kirish" width={279} from="#8247be" to="#7f47c0" icon={<KeyEmoji />} />
        <Bubble $width={529}>
          <Line $bold $tracking={-0.08}>
            <KeyEmoji />
            Tizimga kirish
          </Line>
          <Line />
          <Line $tracking={0.1}>Foydalanuvchi nomingizni kiriting:</Line>
          <Meta $own>14:57</Meta>
          <BubbleTail color="#222d38" />
        </Bubble>
        <Outgoing text="Otaona1" width={271} from="#7845c7" to="#7649cd" tracking={-0.15} />
        <Bubble $width={445}>
          <LastLine>
            <Line $tracking={0.1}>
              <LockEmoji />
              Parolingizni kiriting:
            </Line>
            <Meta>14:57</Meta>
          </LastLine>
          <BubbleTail color="#222d38" />
        </Bubble>
        <Outgoing text="Otaona1" width={271} from="#7350d4" to="#7055dc" tracking={-0.15} />
        <Bubble $width={487}>
          <Line>
            <CheckEmoji />
            Xush kelibsiz, Ota-ona!
          </Line>
          <Line />
          <Line $tracking={-0.04}>
            <TargetEmoji />
            Siz Ota-ona sifatida tizimga
          </Line>
          <Line $tracking={0.1}>kirdingiz.</Line>
          <Line />
          <Line>Quyidagi funksiyalardan</Line>
          <LastLine>
            <Line $tracking={0.1}>foydalanishingiz mumkin:</Line>
            <Meta>14:57</Meta>
          </LastLine>
          <BubbleTail color="#222d38" />
        </Bubble>
      </Chat>

      <Composer>
        <MenuButton aria-label="Menu">
          <svg width="32" height="24" viewBox="0 0 32 24" stroke="#fff" strokeWidth="4" strokeLinecap="round">
            <path d="M2 2 H30 M2 12 H30 M2 22 H30" />
          </svg>
        </MenuButton>
        <svg width="48" height="48" viewBox="0 0 48 48" fill="none" stroke="#74828f" strokeWidth="3.500" strokeLinecap="round" strokeLinejoin="round">
          <path d="M16 2 H32 Q46 2 46 16 V24 Q46 46 24 46 H16 Q2 46 2 32 V16 Q2 2 16 2Z" />
          <path d="M46 27 Q29.500 27.500 29.500 36 V45 M14.500 30.500 Q18.500 36 29 34.500" />
          <ellipse cx="16.500" cy="19.500" rx="2.600" ry="3.200" fill="#74828f" stroke="none" />
          <ellipse cx="31.500" cy="19.500" rx="2.600" ry="3.200" fill="#74828f" stroke="none" />
        </svg>
        <Placeholder>Xabar</Placeholder>
        <ComposerIcons>
          <svg width="46" height="46" viewBox="0 0 46 46" fill="none" stroke="#74828f" strokeWidth="3.600">
            <rect x="1.800" y="1.800" width="42.400" height="42.400" rx="11" />
            <rect x="11.600" y="11.600" width="8.600" height="8.600" rx="2" />
            <rect x="25.800" y="11.600" width="8.600" height="8.600" rx="2" />
            <rect x="11.600" y="25.800" width="8.600" height="8.600" rx="2" />
            <rect x="25.800" y="25.800" width="8.600" height="8.600" rx="2" />
          </svg>
          <svg width="145" height="48" viewBox="-53 0 145 48" fill="none" stroke="#74828f" strokeWidth="3.300" strokeLinecap="round">
            <path d="M2.500 18 L14.500 6 C24 -2.500 43 9 37 24 Q36 27 33 30 L21.500 41.500 C13 49 -4 40.500 4.500 27.500 L18 13.500 C25 7.500 33.500 16 27 23 L15 34.500" />
          </svg>
          <svg width="48" height="48" viewBox="0 0 48 48" fill="none" stroke="#74828f" strokeWidth="3.600">
            <rect x="2" y="2" width="44" height="44" rx="12" />
            <circle cx="24" cy="24" r="10" />
          </svg>
        </ComposerIcons>
      </Composer>

      <Keyboard>
        {keys.map((k) => (
          <Key key={k.label} $wide={k.wide}>
            {k.icon}
            {k.label}
          </Key>
        ))}
      </Keyboard>
      <NavBar>
        <Handle />
      </NavBar>
    </Screen>
  );
}
